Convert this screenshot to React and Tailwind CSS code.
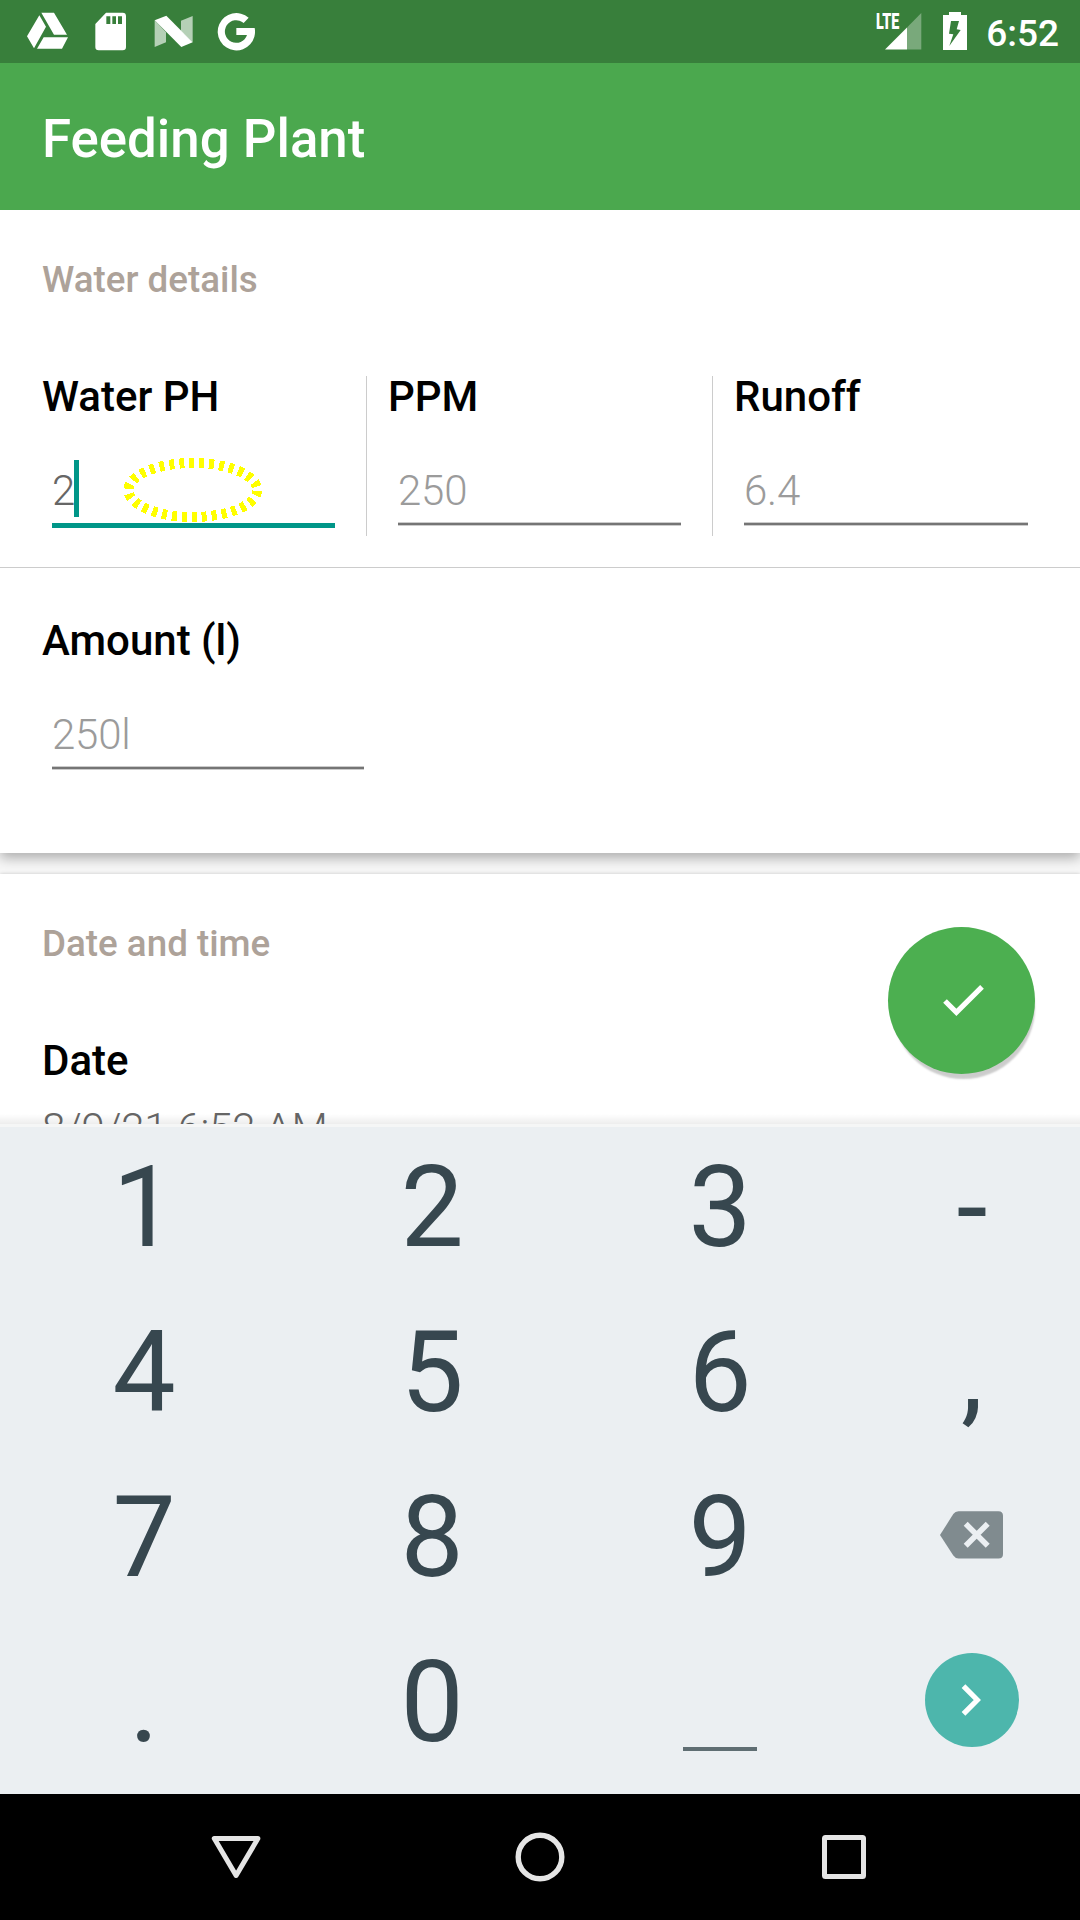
import React from "react";

const SectionTitle = ({ children }) => (
  <h2 className="h-[44px] pl-[42px] text-[36.75px] leading-[44px] font-medium text-[#ada299] whitespace-pre">{children}</h2>
);

const Label = ({ children }) => (
  <div className="h-[50px] text-[42px] leading-[50px] font-medium text-black">{children}</div>
);

function Field({ label, value, active, width = "w-[283px]" }) {
  return (
    <div>
      <Label>{label}</Label>
      <div className={`${width} ml-[10px] mt-[38px] flex h-[57px] items-start`}>
        <span className={`mt-[6px] text-[42px] leading-[50px] font-light tracking-[-0.2px] ${active ? "w-[22px] text-[#666666]" : "text-[#9b9b9b]"}`}>{value}</span>
        {active && <span className="h-[57px] w-[5px] bg-[#009688]" />}
      </div>
      {active ? (
        <div className={`${width} ml-[10px] mt-[6px] h-[5px] bg-[#009688]`} />
      ) : (
        <div className={`${width} ml-[10px] mt-[5px] h-[4px] border-y border-[#cccccc] bg-[#757575]`} />
      )}
    </div>
  );
}

function StatusBar() {
  return (
    <header className="flex h-[63px] items-center justify-between bg-[#387f3b] text-white">
      <svg width="280" height="63" viewBox="0 0 840 189" fill="#fff">
        <path d="M118 46l20 34-36 65-21-36zM124 38h38l39 66h-39zM131 112h73l-18 34h-75z" />
        <path fillRule="evenodd" d="M318 38h50q10 0 10 10v93q0 10-10 10h-72q-10 0-10-10V72zM319 49v23h12V49zM337 49v23h11V49zM354 49v23h12V49z" />
        <path fillOpacity=".63" d="M464 61l34 36v30l-34 14zM578 48v79l-35-34V62z" />
        <path d="M464 61l35-14 79 80-34 14z" />
        <path d="M746 53A56 56 0 1 0 764 84H709V105H741A34 34 0 1 1 731 69Z" />
      </svg>
      <div className="flex h-[63px] items-center pr-[21px]">
        <div className="relative h-[63px] w-[98px]">
          <svg width="98" height="63" viewBox="870 0 98 63" fill="#fff">
            <path d="M885 49.5L907 27.4V49.5z" />
            <path fillOpacity=".33" d="M907 27.4L921.3 13V49.5H907z" />
            <path fillRule="evenodd" d="M943 15h6v-3h12v3h6v35h-24zM951 21L949 33.7L953.3 34.3L949.3 46L960.7 30L956.7 29.3L959 21z" />
          </svg>
          <span className="absolute left-[6px] top-[10px] origin-left scale-x-[0.65] text-[22px] leading-[24px] font-black">LTE</span>
        </div>
        <span className="ml-[18px] mt-[4px] text-[37px] leading-[44px] font-medium">6:52</span>
      </div>
    </header>
  );
}

function Key({ children }) {
  return <div className="flex h-[165px] items-center justify-center text-[112.5px] leading-[132px] text-[#37474f]">{children}</div>;
}

function Keyboard() {
  return (
    <div className="h-[670px] border-t-[3px] border-[#f5f6f6] bg-[#ebeff2]">
      <div className="-mt-[2px] grid grid-cols-[288px_288px_288px_216px]">
        <Key>1</Key><Key>2</Key><Key>3</Key><Key>-</Key>
        <Key>4</Key><Key>5</Key><Key>6</Key><Key>,</Key>
        <Key>7</Key><Key>8</Key><Key>9</Key>
        <Key>
          <svg className="mb-[6px]" width="64" height="48" viewBox="940 1510.5 64 48">
            <path fill="#808b8f" d="M940 1534.5L953.3 1513.6Q955.2 1510.7 958.5 1510.7H998.5Q1003 1510.7 1003 1515.2V1553.5Q1003 1558 998.5 1558H958.5Q955.2 1558 953.3 1555.1Z" />
            <path stroke="#ebeff2" strokeWidth="5.6" d="M965.7 1523.3l22 22M987.7 1523.3l-22 22" />
          </svg>
        </Key>
        <Key>.</Key><Key>0</Key>
        <Key><span className="mt-[93px] h-[4px] w-[74px] bg-[#5f6e73]" /></Key>
        <Key>
          <span className="mb-[5px] flex size-[94.5px] items-center justify-center rounded-full bg-[#4db6ac]">
            <svg width="94" height="94" viewBox="925 1652.5 94 94" fill="none" stroke="#fff" strokeWidth="5.2">
              <path d="M963.5 1685.7L977.3 1699.5L963.5 1713.3" />
            </svg>
          </span>
        </Key>
      </div>
    </div>
  );
}

export default function App() {
  return (
    <div className="relative flex h-[1920px] w-[1080px] flex-col overflow-hidden bg-[#f7f7f7] font-['Roboto',sans-serif]">
      <StatusBar />
      <div className="h-[147px] bg-[#4ba84e] pl-[42px] pt-[3px] text-[52.8px] leading-[147px] font-medium text-white">
        Feeding Plant
      </div>
      <main className="h-[914px] overflow-hidden">
        <section className="h-[643px] bg-white pt-[48px] shadow-[0_5px_12px_rgba(0,0,0,0.3)]">
          <SectionTitle>Water details</SectionTitle>
          <div className="mt-[74px] flex h-[160px]">
            <div className="relative -mt-[4px] w-[366px] pl-[42px]">
              <Field label="Water PH" value="2" active />
              <svg className="absolute left-[120px] top-[82px]" width="146" height="72" viewBox="120 454 146 72" fill="none">
                <ellipse cx="192.8" cy="490" rx="64.3" ry="27" stroke="#ff0" strokeWidth="10" strokeDasharray="5 4.97" strokeDashoffset="-0.8" shapeRendering="crispEdges" />
              </svg>
            </div>
            <div className="w-[346px] border-l border-[#cccccc] pl-[21px]">
              <div className="-mt-[4px]"><Field label="PPM" value="250" /></div>
            </div>
            <div className="w-[368px] border-l border-[#cccccc] pl-[21px]">
              <div className="-mt-[4px]"><Field label="Runoff" value="6.4" width="w-[284px]" /></div>
            </div>
          </div>
          <div className="mt-[31px] border-t border-[#cccccc] pl-[42px] pt-[48px]">
            <Field label="Amount (l)" value="250l" width="w-[312px]" />
          </div>
        </section>
        <section className="mt-[21px] h-[250px] bg-white pt-[48px] shadow-[0_0_4px_rgba(0,0,0,0.2)]">
          <SectionTitle>Date and time</SectionTitle>
          <div className="mt-[70px] pl-[42px]">
            <Label>Date</Label>
            <div className="mt-[18px] text-[42px] leading-[50px] font-light tracking-[-0.2px] text-[#666666]">8/9/21 6:52 AM</div>
          </div>
        </section>
      </main>
      <div className="relative z-10 -mt-[10px] h-[10px] bg-linear-to-b from-transparent to-black/7" />
      <Keyboard />
      <nav className="h-[126px] bg-black">
        <svg width="1080" height="126" viewBox="0 1794 1080 126" fill="none" stroke="#e5e5e5" strokeWidth="5" strokeLinejoin="round">
          <path d="M214.3 1838.5H257.9L236.1 1875.5Z" />
          <circle cx="540" cy="1857" r="21.8" strokeWidth="5.4" />
          <rect x="824.5" y="1837.5" width="39" height="39" rx="1" />
        </svg>
      </nav>
      <button className="absolute left-[888px] top-[927px] flex size-[147px] items-center justify-center rounded-full bg-[#4caf50] shadow-[2px_7px_2px_-2px_rgba(0,0,0,0.2)]">
        <svg width="147" height="147" viewBox="888 927 147 147" fill="none" stroke="#fff" strokeWidth="5.2">
          <path d="M945 1001L956.4 1012.4L982 986.8" />
        </svg>
      </button>
    </div>
  );
}
